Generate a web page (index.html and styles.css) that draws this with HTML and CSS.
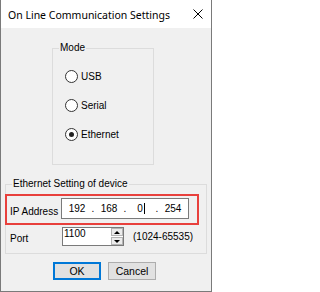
FILE: index.html
```html
<!DOCTYPE html>
<html>
<head>
<meta charset="utf-8">
<link rel="stylesheet" href="styles.css">
</head>
<body>
<div class="window">
  <div class="titlebar">
    <span class="title">On Line Communication Settings</span>
    <svg class="close" width="10" height="10" viewBox="0 0 10 10"><path d="M0.5 0.5L9.5 9.5M9.5 0.5L0.5 9.5" stroke="#000" stroke-width="1" fill="none"/></svg>
  </div>
  <div class="client">
    <fieldset class="group mode">
      <legend>Mode</legend>
      <div class="radios">
        <div class="radio"><span class="circle"></span><span>USB</span></div>
        <div class="radio"><span class="circle"></span><span>Serial</span></div>
        <div class="radio"><span class="circle checked"><span class="dot"></span></span><span>Ethernet</span></div>
      </div>
    </fieldset>
    <fieldset class="group eth">
      <legend>Ethernet Setting of device</legend>
      <div class="ip-row">
        <span class="lbl ip-lbl">IP Address</span>
        <div class="ipbox">
          <span class="oct">192</span><span class="sep">.</span><span class="oct">168</span><span class="sep">.</span><span class="oct">0<span class="caret"></span></span><span class="sep">.</span><span class="oct">254</span>
        </div>
      </div>
      <div class="port-row">
        <span class="lbl port-lbl">Port</span>
        <div class="spin">
          <span class="val">1100</span>
          <div class="spin-btns">
            <span class="sb"><span class="tri up"></span></span>
            <span class="sb"><span class="tri down"></span></span>
          </div>
        </div>
        <span class="range">(1024-65535)</span>
      </div>
    </fieldset>
    <div class="buttons">
      <div class="btn default">OK</div>
      <div class="btn">Cancel</div>
    </div>
  </div>
</div>
</body>
</html>
```
FILE: styles.css
```css
* { box-sizing: border-box; }
html, body { margin: 0; padding: 0; }
body { width: 212px; height: 292px; overflow: hidden; }

.window {
  width: 212px;
  height: 292px;
  background: #f0f0f0;
  border: 1px solid #7a7a7a;
  border-top: none;
  display: flex;
  flex-direction: column;
  font-family: "Liberation Sans", Arial, sans-serif;
  font-size: 10px;
  line-height: 12px;
  color: #000;
}

.titlebar {
  height: 28px;
  flex: none;
  background: #fff;
  display: flex;
  align-items: center;
  padding-left: 7px;
  padding-right: 8px;
}
.title {
  font-family: "Noto Sans", "Open Sans", sans-serif;
  font-size: 10.5px;
  line-height: 14px;
  padding-top: 1px;
}
.close { margin-left: auto; display: block; }

.client { display: flex; flex-direction: column; }

.group {
  margin: 0;
  padding: 0;
  border: 1px solid #dcdcdc;
  min-width: 0;
}
.group legend {
  padding: 0 1px;
  margin-left: 6px;
  font-size: 10px;
  line-height: 12px;
}

.mode {
  margin: 14px 0 0 51px;
  width: 102px;
  height: 123px;
}
.radios {
  display: flex;
  flex-direction: column;
  gap: 16px;
  padding: 16px 0 0 12px;
}
.radio {
  display: flex;
  align-items: center;
  height: 13px;
}
.circle {
  width: 13px;
  height: 13px;
  border: 1px solid #333;
  border-radius: 50%;
  background: #fff;
  margin-right: 3px;
  display: flex;
  align-items: center;
  justify-content: center;
  flex: none;
}
.dot {
  width: 5px;
  height: 5px;
  border-radius: 50%;
  background: #222;
}

.eth {
  margin: 13px 0 0 4px;
  width: 202px;
  height: 76px;
}
.ip-row {
  margin: 4px 0 0 -1px;
  width: 194px;
  height: 31px;
  border: 2px solid #e8403c;
  padding-left: 3px;
  display: flex;
  align-items: flex-start;
}
.lbl { flex: none; }
.ip-lbl { width: 51px; margin-top: 10px; }
.ipbox {
  margin-top: 2px;
  width: 128px;
  height: 21px;
  border: 1px solid #7a7a7a;
  background: #fff;
  display: flex;
  align-items: center;
  padding-left: 3px;
}
.oct { width: 24px; text-align: center; display: inline-flex; justify-content: center; align-items: center; }
.sep { width: 8px; text-align: center; }
.caret { display: inline-block; width: 1px; height: 11px; background: #000; margin-left: 1px; }

.port-row {
  margin-top: 2px;
  display: flex;
  align-items: flex-start;
  padding-left: 4px;
}
.port-lbl { width: 52px; margin-top: 6px; }
.spin {
  width: 62px;
  height: 19px;
  border: 1px solid #7a7a7a;
  background: #fff;
  display: flex;
  padding-left: 1px;
}
.val { line-height: 12px; margin-top: 0; }
.spin-btns {
  margin-left: auto;
  width: 12px;
  display: flex;
  flex-direction: column;
  gap: 1px;
}
.sb {
  flex: 1;
  background: #ececec;
  border: 1px solid #b4b4b4;
  display: flex;
  align-items: center;
  justify-content: center;
}
.tri { width: 0; height: 0; border-left: 3px solid transparent; border-right: 3px solid transparent; }
.tri.up { border-bottom: 3px solid #000; }
.tri.down { border-top: 3px solid #000; }
.range { margin-left: 9px; margin-top: 4px; }

.buttons {
  margin-top: 8px;
  padding-left: 52px;
  display: flex;
  gap: 7px;
}
.btn {
  width: 48px;
  height: 18px;
  background: #e1e1e1;
  border: 1px solid #adadad;
  display: flex;
  align-items: center;
  justify-content: center;
  font-size: 10.5px;
}
.btn.default {
  border-color: #0078d7;
  box-shadow: inset 0 0 0 1px #0078d7;
}
```
